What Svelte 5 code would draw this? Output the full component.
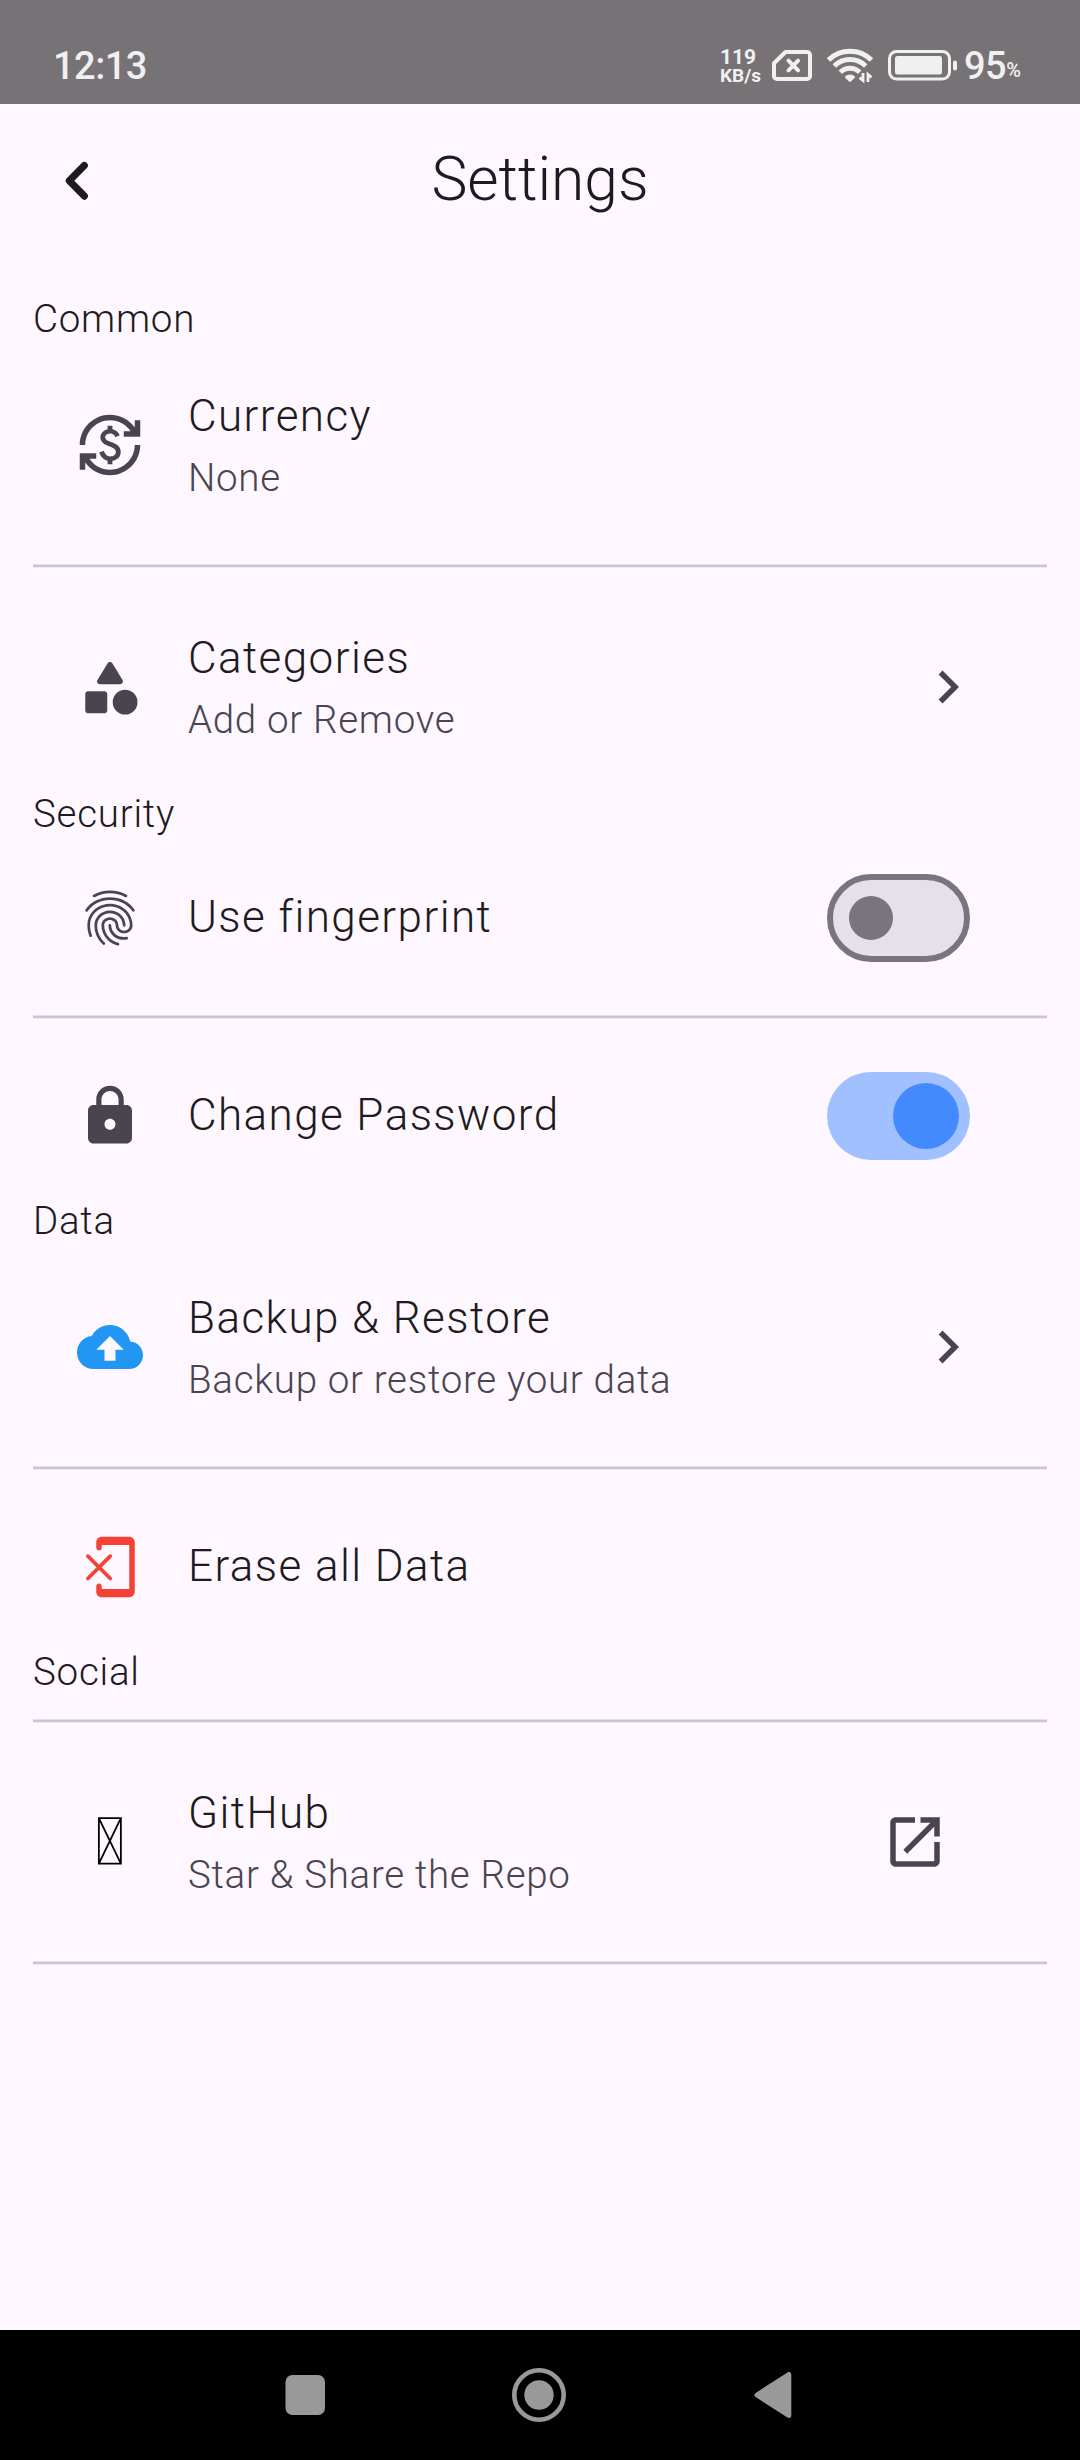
<script>
  const sections = [
    {
      label: 'Common',
      items: [
        { title: 'Currency', subtitle: 'None', icon: 'currency', divider: true },
        { title: 'Categories', subtitle: 'Add or Remove', icon: 'category', trailing: 'chevron' },
      ],
    },
    {
      label: 'Security',
      items: [
        { title: 'Use fingerprint', icon: 'fingerprint', trailing: 'switch', on: false, divider: true },
        { title: 'Change Password', icon: 'lock', trailing: 'switch', on: true },
      ],
    },
    {
      label: 'Data',
      items: [
        { title: 'Backup & Restore', subtitle: 'Backup or restore your data', icon: 'backup', trailing: 'chevron', divider: true },
        { title: 'Erase all Data', icon: 'erase' },
      ],
    },
    {
      label: 'Social',
      ruled: true,
      items: [
        { title: 'GitHub', subtitle: 'Star & Share the Repo', icon: 'missing', trailing: 'open', divider: true },
      ],
    },
  ];

  const icons = {
    currency: `M12.89,11.1c-1.78-0.59-2.64-0.96-2.64-1.9c0-1.02,1.11-1.39,1.81-1.39c1.31,0,1.79,0.99,1.9,1.34l1.58-0.67
      c-0.15-0.44-0.82-1.91-2.66-2.23V5h-1.75v1.26c-2.6,0.56-2.62,2.85-2.62,2.96c0,2.27,2.25,2.91,3.35,3.31
      c1.58,0.56,2.28,1.07,2.28,2.03c0,1.13-1.05,1.61-1.98,1.61c-1.82,0-2.34-1.87-2.4-2.09L8.1,14.75
      c0.63,2.19,2.28,2.78,3.02,2.96V19h1.75v-1.24c0.52-0.09,3.02-0.59,3.02-3.22C15.9,13.15,15.29,11.93,12.89,11.1z
      M3,21H1v-6h6v2l-2.48,0c1.61,2.41,4.36,4,7.48,4c4.97,0,9-4.03,9-9h2c0,6.08-4.92,11-11,11c-3.72,0-7.01-1.85-9-4.67L3,21z
      M1,12C1,5.92,5.92,1,12,1c3.72,0,7.01,1.85,9,4.67L21,3h2v6h-6V7l2.48,0C17.87,4.59,15.12,3,12,3c-4.97,0-9,4.03-9,9H1z`,
    category: `M11.15 3.4 7.43 9.48c-.41.66.07 1.52.85 1.52h7.43c.78 0 1.26-.86.85-1.52L12.85 3.4c-.39-.64-1.31-.64-1.7 0z
      M17.5 13a4.5 4.5 0 1 0 0 9 4.5 4.5 0 0 0 0-9z
      M4 21.5h6c.55 0 1-.45 1-1v-6c0-.55-.45-1-1-1H4c-.55 0-1 .45-1 1v6c0 .55.45 1 1 1z`,
    fingerprint: `M17.81 4.47c-.08 0-.16-.02-.23-.06C15.66 3.42 14 3 12.01 3c-1.98 0-3.86.47-5.57 1.41-.24.13-.54.04-.68-.2
      -.13-.24-.04-.55.2-.68C7.82 2.52 9.86 2 12.01 2c2.13 0 3.99.47 6.03 1.52.25.13.34.43.21.67-.09.18-.26.28-.44.28z
      M3.5 9.72c-.1 0-.2-.03-.29-.09-.23-.16-.28-.47-.12-.7.99-1.4 2.25-2.5 3.75-3.27C9.98 4.04 14 4.03 17.15 5.65
      c1.5.77 2.76 1.86 3.75 3.25.16.22.11.54-.12.7-.23.16-.54.11-.7-.12-.9-1.26-2.04-2.25-3.39-2.94
      -2.87-1.47-6.54-1.47-9.4.01-1.36.7-2.5 1.7-3.4 2.96-.08.14-.23.21-.39.21z
      m6.25 12.07c-.13 0-.26-.05-.35-.15-.87-.87-1.34-1.43-2.01-2.64-.69-1.23-1.05-2.73-1.05-4.34 0-2.97 2.54-5.39 5.66-5.39
      s5.66 2.42 5.66 5.39c0 .28-.22.5-.5.5s-.5-.22-.5-.5c0-2.42-2.09-4.39-4.66-4.39-2.57 0-4.66 1.97-4.66 4.39
      0 1.44.32 2.77.93 3.85.64 1.15 1.08 1.64 1.85 2.42.19.2.19.51 0 .71-.11.1-.24.15-.37.15z
      m7.17-1.85c-1.19 0-2.24-.3-3.1-.89-1.49-1.01-2.38-2.65-2.38-4.39 0-.28.22-.5.5-.5s.5.22.5.5
      c0 1.41.72 2.74 1.94 3.56.71.48 1.54.71 2.54.71.24 0 .64-.03 1.04-.1.27-.05.53.13.58.41.05.27-.13.53-.41.58
      -.57.11-1.07.12-1.21.12z
      M14.91 22c-.04 0-.09-.01-.13-.02-1.59-.44-2.63-1.03-3.72-2.1-1.4-1.39-2.17-3.24-2.17-5.22 0-1.62 1.38-2.94 3.08-2.94
      1.7 0 3.08 1.32 3.08 2.94 0 1.07.93 1.94 2.08 1.94s2.08-.87 2.08-1.94c0-3.77-3.25-6.83-7.25-6.83
      -2.84 0-5.44 1.58-6.61 4.03-.39.81-.59 1.76-.59 2.8 0 .78.07 2.01.67 3.61.1.26-.03.55-.29.64-.26.1-.55-.04-.64-.29
      -.49-1.31-.73-2.61-.73-3.96 0-1.2.23-2.29.68-3.24 1.33-2.79 4.28-4.6 7.51-4.6 4.55 0 8.25 3.51 8.25 7.83
      0 1.62-1.38 2.94-3.08 2.94s-3.08-1.32-3.08-2.94c0-1.07-.93-1.94-2.08-1.94s-2.08.87-2.08 1.94
      c0 1.71.66 3.31 1.87 4.51.95.94 1.86 1.46 3.27 1.85.27.07.42.35.35.61-.05.23-.26.38-.47.38z`,
    lock: `M18 8h-1V6c0-2.76-2.24-5-5-5S7 3.24 7 6v2H6c-1.1 0-2 .9-2 2v10c0 1.1.9 2 2 2h12c1.1 0 2-.9 2-2V10c0-1.1-.9-2-2-2z
      m-6 9c-1.1 0-2-.9-2-2s.9-2 2-2 2 .9 2 2-.9 2-2 2z
      m3.1-9H8.9V6c0-1.71 1.39-3.1 3.1-3.1 1.71 0 3.1 1.39 3.1 3.1v2z`,
    backup: `M19.35 10.04C18.67 6.59 15.64 4 12 4 9.11 4 6.6 5.64 5.35 8.04 2.34 8.36 0 10.91 0 14c0 3.31 2.69 6 6 6h13
      c2.76 0 5-2.24 5-5 0-2.64-2.05-4.78-4.65-4.96zM14 13v4h-4v-4H7l5-5 5 5h-3z`,
    chevron: 'M10 6 8.59 7.41 13.17 12l-4.58 4.59L10 18l6-6z',
    open: `M19 19H5V5h7V3H5c-1.11 0-2 .9-2 2v14c0 1.1.89 2 2 2h14c1.1 0 2-.9 2-2v-7h-2v7z
      M14 3v2h3.59l-9.83 9.83 1.41 1.41L19 6.41V10h2V3h-7z`,
  };
</script>

<div class="screen">
  <header class="status">
    <span class="clock">12:13</span>
    <div class="indicators">
      <div class="speed"><span class="rate">119</span><span class="unit">KB/s</span></div>
      <svg class="sim" viewBox="0 0 40 31">
        <path d="M13.5 2H35a3 3 0 0 1 3 3v21a3 3 0 0 1-3 3H5a3 3 0 0 1-3-3V13.2z" fill="none" stroke="currentColor" stroke-width="4" stroke-linejoin="round" />
        <path d="M16.5 10.7l9.6 9.6m0-9.6l-9.6 9.6" fill="none" stroke="currentColor" stroke-width="4" stroke-linecap="round" />
      </svg>
      <svg class="wifi" viewBox="0 0 46 36">
        <g fill="none" stroke="currentColor" stroke-width="5">
          <path d="M1.5 13a30.5 30.5 0 0 1 43 0" />
          <path d="M7.3 19.1a22.2 22.2 0 0 1 31.4 0" />
          <path d="M13.3 25.2a13.7 13.7 0 0 1 19.4 0" />
        </g>
        <path d="M18 29.5a7.2 7.2 0 0 1 10 0v1L24.5 34a2 2 0 0 1-3 0L18 30.5z" fill="currentColor" />
        <path d="M36 26v7.5l-3.5-2.8M41 35v-7.5l3.5 2.8" fill="none" stroke="currentColor" stroke-width="2.8" />
      </svg>
      <svg class="battery" viewBox="0 0 70 31">
        <rect x="1.5" y="1.5" width="60" height="27.5" rx="7" fill="none" stroke="currentColor" stroke-width="3" />
        <rect x="7" y="6" width="47" height="18.5" rx="2.5" fill="currentColor" />
        <rect x="65" y="10.5" width="4" height="10" rx="2" fill="currentColor" />
      </svg>
      <span class="level">95</span><span class="percent">%</span>
    </div>
  </header>

  <div class="appbar">
    <button class="back" aria-label="Back">
      <svg viewBox="0 0 66 66"><path d="M40.3 17.5L25.3 32.8l15 15.3" fill="none" stroke="currentColor" stroke-width="7.2" stroke-linecap="round" stroke-linejoin="round" /></svg>
    </button>
    <h1>Settings</h1>
    <span></span>
  </div>

  <main>
    {#each sections as section}
      <h2>{section.label}</h2>
      {#if section.ruled}<div class="divider"></div>{/if}
      {#each section.items as item}
        <div class="tile" class:tall={item.subtitle}>
          <svg class="icon {item.icon}" viewBox="0 0 24 24">
            {#if item.icon === 'erase'}
              <path d="M19 1H9C7.9 1 7 1.9 7 3v2c0 .55.45 1 1 1s1-.45 1-1V4h10v16H9v-1c0-.55-.45-1-1-1s-1 .45-1 1v2c0 1.1.9 2 2 2h10c1.1 0 2-.9 2-2V3c0-1.1-.9-2-2-2z" fill="currentColor" />
              <path d="M3.95 8.05l8.15 8.15m0-8.15l-8.15 8.15" fill="none" stroke="currentColor" stroke-width="1.35" stroke-linecap="round" />
            {:else if item.icon === 'missing'}
              <path d="M7.95 3.35h8v16.5h-8zl8 16.5M15.95 3.35l-8 16.5" fill="none" stroke="currentColor" stroke-width=".65" />
            {:else}
              <path d={icons[item.icon]} fill="currentColor" />
            {/if}
          </svg>
          <div class="text">
            <span class="title">{item.title}</span>
            {#if item.subtitle}<span class="subtitle">{item.subtitle}</span>{/if}
          </div>
          {#if item.trailing === 'switch'}
            <button class="switch" class:on={item.on} role="switch" aria-checked={item.on} aria-label={item.title}>
              <span class="thumb"></span>
            </button>
          {:else if item.trailing}
            <svg class="icon {item.trailing}" viewBox="0 0 24 24"><path d={icons[item.trailing]} fill="currentColor" /></svg>
          {/if}
        </div>
        {#if item.divider}<div class="divider"></div>{/if}
      {/each}
    {/each}
  </main>

  <nav>
    <svg viewBox="0 0 66 66"><rect x="13.5" y="13" width="39.5" height="40" rx="7" fill="currentColor" /></svg>
    <svg viewBox="0 0 66 66">
      <circle cx="32" cy="33" r="24.7" fill="none" stroke="currentColor" stroke-width="4.6" />
      <circle cx="32" cy="33" r="14.7" fill="currentColor" />
    </svg>
    <svg viewBox="0 0 66 66"><path d="M15 33L46.8 12.5v41z" fill="currentColor" stroke="currentColor" stroke-width="5" stroke-linejoin="round" /></svg>
  </nav>
</div>

<style>
  :global(body) {
    margin: 0;
  }
  .screen {
    display: flex;
    flex-direction: column;
    width: 1080px;
    height: 2460px;
    background: #fef7ff;
    color: #1d1b20;
    font-family: Roboto, sans-serif;
    font-weight: 300;
  }
  svg {
    display: block;
    flex: none;
  }
  button {
    padding: 0;
    border: 0;
    background: none;
    color: inherit;
  }

  .status {
    display: flex;
    box-sizing: border-box;
    height: 104px;
    padding: 26px 0 0 53px;
    align-items: center;
    justify-content: space-between;
    background: #777276;
    color: #f1f0f1;
    font-weight: 500;
  }
  .clock,
  .level {
    padding-top: 2px;
    font-size: 38px;
    line-height: 44px;
    letter-spacing: -0.5px;
  }
  .indicators {
    display: flex;
    width: 360px;
    align-items: center;
  }
  .speed {
    display: flex;
    flex-direction: column;
    width: 52px;
    padding-top: 3px;
    font-weight: 700;
  }
  .rate {
    font-size: 21px;
    line-height: 18px;
  }
  .unit {
    font-size: 19px;
    line-height: 19px;
  }
  .sim {
    width: 40px;
    height: 31px;
    margin-right: 15px;
  }
  .wifi {
    width: 46px;
    height: 36px;
    margin-right: 15px;
  }
  .battery {
    width: 70px;
    height: 31px;
    margin-right: 6px;
  }
  .percent {
    padding-top: 10px;
    font-size: 20px;
    line-height: 24px;
  }

  .appbar {
    display: grid;
    grid-template-columns: 154px 1fr 154px;
    height: 154px;
    align-items: center;
  }
  .back {
    justify-self: center;
  }
  .back svg {
    width: 66px;
    height: 66px;
  }
  h1 {
    margin: 0;
    padding-bottom: 4px;
    text-align: center;
    font-size: 60.5px;
    font-weight: 300;
    line-height: 77px;
  }

  main {
    display: flex;
    flex: 1;
    flex-direction: column;
    padding: 33px 33px 0;
  }
  h2 {
    margin: 0;
    font-size: 38.5px;
    font-weight: 300;
    line-height: 55px;
    letter-spacing: 0.75px;
  }
  .tile {
    display: flex;
    box-sizing: border-box;
    height: 154px;
    padding: 0 66px 0 44px;
    gap: 45px;
    align-items: center;
  }
  .tile.tall {
    height: 198px;
  }
  .icon {
    width: 66px;
    height: 66px;
    color: #49454f;
  }
  .icon.backup {
    color: #2196f3;
  }
  .icon.erase {
    color: #f44336;
  }
  .icon.missing {
    color: #000;
  }
  .icon.open {
    margin-right: 33px;
  }
  .text {
    display: flex;
    flex: 1;
    flex-direction: column;
    padding-bottom: 2px;
  }
  .tall .text {
    gap: 1px;
  }
  .title {
    font-size: 44px;
    line-height: 66px;
    letter-spacing: 1.42px;
  }
  .subtitle {
    color: #49454f;
    font-size: 38.5px;
    line-height: 55px;
    letter-spacing: 0.7px;
  }
  .divider {
    height: 4px;
    margin: 20px 0;
    background: linear-gradient(#e4dee8 1px, #cac4d0 1px 3px, #efe9f2 3px);
  }
  .switch {
    display: flex;
    box-sizing: border-box;
    width: 143px;
    height: 88px;
    margin-right: 11px;
    padding: 0 16px;
    align-items: center;
    border: 6px solid #79747e;
    border-radius: 44px;
    background: #e6e0e9;
  }
  .thumb {
    width: 44px;
    height: 44px;
    border-radius: 50%;
    background: #79747e;
  }
  .switch.on {
    justify-content: flex-end;
    padding: 0 11px;
    border: 0;
    background: #a1c0ff;
  }
  .on .thumb {
    width: 66px;
    height: 66px;
    background: #448aff;
  }

  nav {
    display: flex;
    height: 130px;
    padding: 0 272px;
    align-items: center;
    justify-content: space-between;
    background: #000;
    color: #999;
  }
  nav svg {
    width: 66px;
    height: 66px;
  }
</style>
